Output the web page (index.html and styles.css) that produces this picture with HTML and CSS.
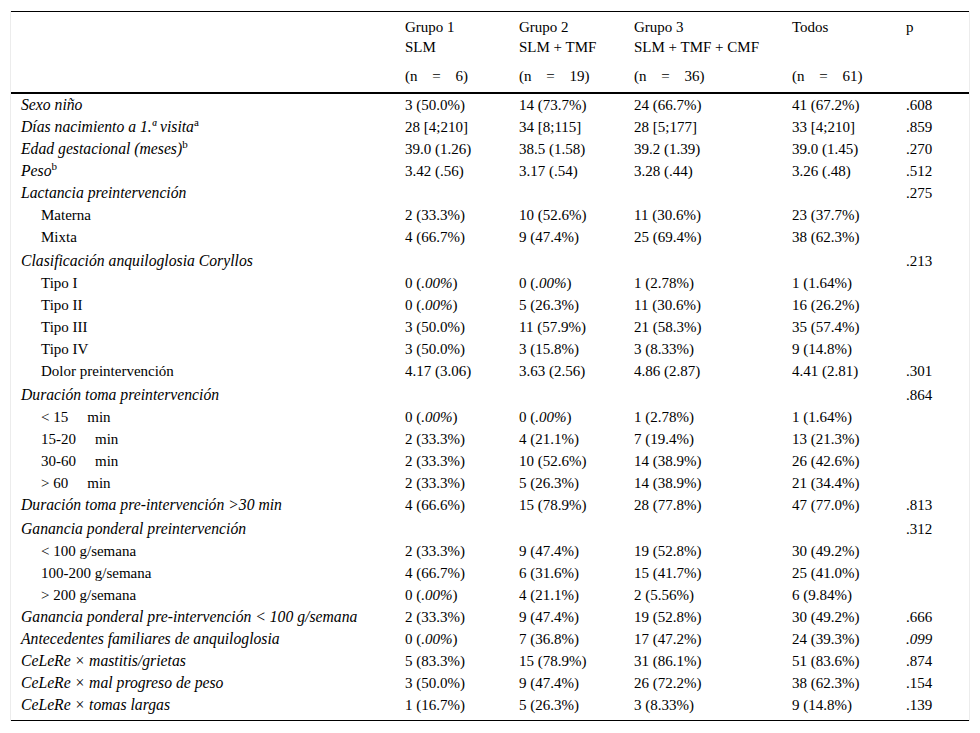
FILE: index.html
```html
<!DOCTYPE html>
<html lang="es">
<head>
<meta charset="utf-8">
<title>Tabla</title>
<link rel="stylesheet" href="styles.css">
</head>
<body>
<div class="wrap">
<table class="tbl">
<colgroup>
<col class="c-lab"><col class="c-g1"><col class="c-g2"><col class="c-g3"><col class="c-all"><col class="c-p">
</colgroup>
<thead>
<tr class="h1">
<th></th>
<th>Grupo 1<br>SLM</th>
<th>Grupo 2<br>SLM + TMF</th>
<th>Grupo 3<br>SLM + TMF + CMF</th>
<th>Todos</th>
<th>p</th>
</tr>
<tr class="h2">
<th></th>
<th><span class="ws">(n = 6)</span></th>
<th><span class="ws">(n = 19)</span></th>
<th><span class="ws">(n = 36)</span></th>
<th><span class="ws">(n = 61)</span></th>
<th></th>
</tr>
</thead>
<tbody>
<tr><td class="it">Sexo niño</td><td>3 (50.0%)</td><td>14 (73.7%)</td><td>24 (66.7%)</td><td>41 (67.2%)</td><td>.608</td></tr>
<tr><td class="it">Días nacimiento a 1.ª visita<sup>a</sup></td><td>28 [4;210]</td><td>34 [8;115]</td><td>28 [5;177]</td><td>33 [4;210]</td><td>.859</td></tr>
<tr><td class="it">Edad gestacional (meses)<sup>b</sup></td><td>39.0 (1.26)</td><td>38.5 (1.58)</td><td>39.2 (1.39)</td><td>39.0 (1.45)</td><td>.270</td></tr>
<tr><td class="it">Peso<sup>b</sup></td><td>3.42 (.56)</td><td>3.17 (.54)</td><td>3.28 (.44)</td><td>3.26 (.48)</td><td>.512</td></tr>
<tr><td class="it">Lactancia preintervención</td><td></td><td></td><td></td><td></td><td>.275</td></tr>
<tr><td class="sub">Materna</td><td>2 (33.3%)</td><td>10 (52.6%)</td><td>11 (30.6%)</td><td>23 (37.7%)</td><td></td></tr>
<tr><td class="sub">Mixta</td><td>4 (66.7%)</td><td>9 (47.4%)</td><td>25 (69.4%)</td><td>38 (62.3%)</td><td></td></tr>
<tr class="grp"><td class="it">Clasificación anquiloglosia Coryllos</td><td></td><td></td><td></td><td></td><td>.213</td></tr>
<tr><td class="sub">Tipo I</td><td>0 (<i>.00%</i>)</td><td>0 (<i>.00%</i>)</td><td>1 (2.78%)</td><td>1 (1.64%)</td><td></td></tr>
<tr><td class="sub">Tipo II</td><td>0 (<i>.00%</i>)</td><td>5 (26.3%)</td><td>11 (30.6%)</td><td>16 (26.2%)</td><td></td></tr>
<tr><td class="sub">Tipo III</td><td>3 (50.0%)</td><td>11 (57.9%)</td><td>21 (58.3%)</td><td>35 (57.4%)</td><td></td></tr>
<tr><td class="sub">Tipo IV</td><td>3 (50.0%)</td><td>3 (15.8%)</td><td>3 (8.33%)</td><td>9 (14.8%)</td><td></td></tr>
<tr><td class="sub">Dolor preintervención</td><td>4.17 (3.06)</td><td>3.63 (2.56)</td><td>4.86 (2.87)</td><td>4.41 (2.81)</td><td>.301</td></tr>
<tr class="grp"><td class="it">Duración toma preintervención</td><td></td><td></td><td></td><td></td><td>.864</td></tr>
<tr><td class="sub">&lt; 15<span class="unit">min</span></td><td>0 (<i>.00%</i>)</td><td>0 (<i>.00%</i>)</td><td>1 (2.78%)</td><td>1 (1.64%)</td><td></td></tr>
<tr><td class="sub">15-20<span class="unit">min</span></td><td>2 (33.3%)</td><td>4 (21.1%)</td><td>7 (19.4%)</td><td>13 (21.3%)</td><td></td></tr>
<tr><td class="sub">30-60<span class="unit">min</span></td><td>2 (33.3%)</td><td>10 (52.6%)</td><td>14 (38.9%)</td><td>26 (42.6%)</td><td></td></tr>
<tr><td class="sub">&gt; 60<span class="unit">min</span></td><td>2 (33.3%)</td><td>5 (26.3%)</td><td>14 (38.9%)</td><td>21 (34.4%)</td><td></td></tr>
<tr><td class="it">Duración toma pre-intervención &gt;30 min</td><td>4 (66.6%)</td><td>15 (78.9%)</td><td>28 (77.8%)</td><td>47 (77.0%)</td><td>.813</td></tr>
<tr class="grp"><td class="it">Ganancia ponderal preintervención</td><td></td><td></td><td></td><td></td><td>.312</td></tr>
<tr><td class="sub">&lt; 100 g/semana</td><td>2 (33.3%)</td><td>9 (47.4%)</td><td>19 (52.8%)</td><td>30 (49.2%)</td><td></td></tr>
<tr><td class="sub">100-200 g/semana</td><td>4 (66.7%)</td><td>6 (31.6%)</td><td>15 (41.7%)</td><td>25 (41.0%)</td><td></td></tr>
<tr><td class="sub">&gt; 200 g/semana</td><td>0 (<i>.00%</i>)</td><td>4 (21.1%)</td><td>2 (5.56%)</td><td>6 (9.84%)</td><td></td></tr>
<tr><td class="it">Ganancia ponderal pre-intervención &lt; 100 g/semana</td><td>2 (33.3%)</td><td>9 (47.4%)</td><td>19 (52.8%)</td><td>30 (49.2%)</td><td>.666</td></tr>
<tr><td class="it">Antecedentes familiares de anquiloglosia</td><td>0 (<i>.00%</i>)</td><td>7 (36.8%)</td><td>17 (47.2%)</td><td>24 (39.3%)</td><td><i>.099</i></td></tr>
<tr><td class="it">CeLeRe × mastitis/grietas</td><td>5 (83.3%)</td><td>15 (78.9%)</td><td>31 (86.1%)</td><td>51 (83.6%)</td><td>.874</td></tr>
<tr><td class="it">CeLeRe × mal progreso de peso</td><td>3 (50.0%)</td><td>9 (47.4%)</td><td>26 (72.2%)</td><td>38 (62.3%)</td><td>.154</td></tr>
<tr class="last"><td class="it">CeLeRe × tomas largas</td><td>1 (16.7%)</td><td>5 (26.3%)</td><td>3 (8.33%)</td><td>9 (14.8%)</td><td>.139</td></tr>
</tbody>
</table>
</div>
</body>
</html>
```
FILE: styles.css
```css
html, body {
  margin: 0;
  padding: 0;
  background: #fff;
}

body {
  font-family: "Liberation Serif", "Times New Roman", serif;
  font-size: 15px;
  color: #000;
}

.wrap {
  margin: 11px;
  width: 958px;
  box-shadow: -1px 0 0 #ececec, 1px 0 0 #ececec;
}

.tbl {
  width: 958px;
  border-collapse: collapse;
  table-layout: fixed;
  border-top: 1px solid #000;
  border-bottom: 1px solid #000;
}

.c-lab { width: 384px; }
.c-g1 { width: 114px; }
.c-g2 { width: 115px; }
.c-g3 { width: 158px; }
.c-all { width: 114px; }
.c-p { width: 73px; }

th {
  font-weight: normal;
  text-align: left;
  vertical-align: top;
  padding: 0 10px;
  line-height: 20px;
  white-space: nowrap;
}

.h1 th {
  padding-top: 5px;
  padding-bottom: 3px;
}

.h2 th {
  padding-top: 6px;
  padding-bottom: 6px;
}

thead {
  border-bottom: 2px solid #000;
}

.ws {
  word-spacing: 11px;
}

td {
  padding: 2px 10px;
  line-height: 18px;
  text-align: left;
  vertical-align: top;
  white-space: nowrap;
}

.grp td {
  padding-top: 4px;
}

.last td {
  padding-bottom: 6px;
}

.it {
  font-style: italic;
  font-size: 15.7px;
}

.sub {
  padding-left: 30px;
}

.unit {
  margin-left: 19px;
}

sup {
  font-size: 11px;
  font-style: normal;
  line-height: 0;
  vertical-align: baseline;
  position: relative;
  top: -6px;
}
```
